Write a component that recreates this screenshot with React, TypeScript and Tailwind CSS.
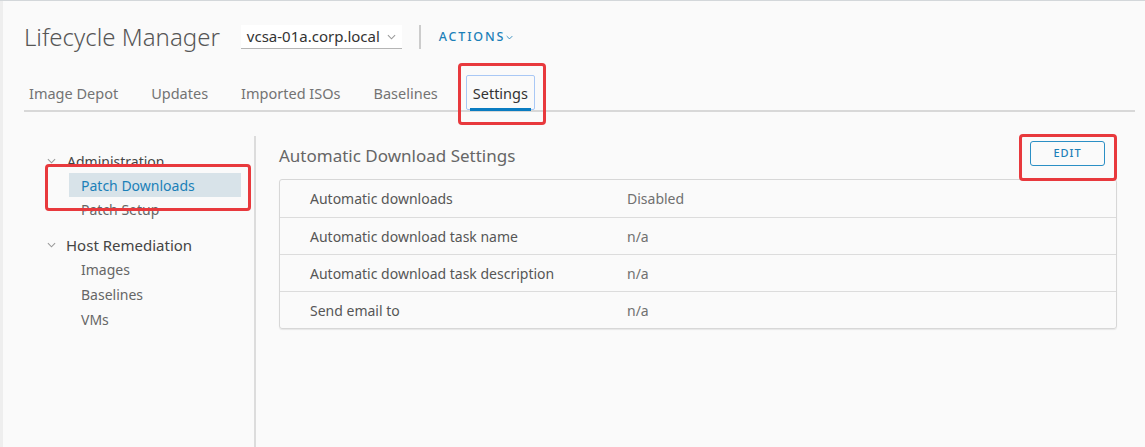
const FONT = "font-['Noto_Sans','Open_Sans',sans-serif]"

function Chevron({ className }: { className?: string }) {
  return (
    <svg viewBox="0 0 10 6" className={className} fill="none" aria-hidden="true">
      <path d="M1 1l4 4 4-4" stroke="currentColor" strokeWidth="1.2" />
    </svg>
  )
}

const tabs = ['Image Depot', 'Updates', 'Imported ISOs', 'Baselines', 'Settings']

const rows = [
  ['Automatic downloads', 'Disabled'],
  ['Automatic download task name', 'n/a'],
  ['Automatic download task description', 'n/a'],
  ['Send email to', 'n/a'],
]

export default function App() {
  return (
    <div className={`${FONT} relative w-[1145px] h-[447px] overflow-hidden bg-[#fafafa] border-t border-[#d3d7da] text-[#565656]`}>
      <div className="h-full border-l-[3px] border-[#eeeeee] flex flex-col">
        {/* Header */}
        <div className="pl-[21px] pr-[10px] pt-[24px]">
          <div className="flex items-center h-[24px]">
            <h1 className="text-[24px] font-light leading-[24px] text-[#565656] tracking-[0px]">Lifecycle Manager</h1>
            <div className="ml-[21px] flex items-center h-[24px] bg-white border-b border-[#b5b5b5] pl-[6px] pr-[6px] text-[15px] text-[#333]">
              vcsa-01a.corp.local
              <Chevron className="ml-[7px] w-[9px] h-[6px] text-[#999]" />
            </div>
            <div className="ml-[17px] w-[2px] h-[24px] bg-[#ccc]" />
            <button className="ml-[18px] flex items-center text-[12.5px] font-medium tracking-[1.8px] text-[#1b80b8]">
              ACTIONS
              <Chevron className="ml-[1px] w-[7px] h-[5px]" />
            </button>
          </div>

          {/* Tabs */}
          <div className="mt-[26px] flex gap-[23px] border-b-2 border-[#d8d8d8]">
            {tabs.map((t) => {
              const active = t === 'Settings'
              return (
                <div
                  key={t}
                  className={
                    active
                      ? 'relative h-[35px] pt-[2px] px-[6px] flex items-center text-[14.5px] text-[#333] border border-[#a9c8f5] rounded-[2px]'
                      : 'h-[35px] pt-[2px] px-[5px] flex items-center text-[14.5px] text-[#737373]'
                  }
                >
                  {t}
                  {active && <div className="absolute left-[3px] right-[3px] -bottom-[2px] h-[3px] bg-[#0a7cc1]" />}
                </div>
              )
            })}
          </div>
        </div>

        {/* Body */}
        <div className="flex flex-1 mt-[24px]">
          <nav className="w-[253px] shrink-0 border-r-2 border-[#dcdcdc] pt-[13px] text-[14px]">
            <div className="flex items-center h-[24px] pl-[44px]">
              <Chevron className="w-[9px] h-[6px] text-[#999]" />
              <span className="ml-[11px] text-[#444]">Administration</span>
            </div>
            <div className="ml-[66px] w-[172px] h-[24px] flex items-center pl-[12px] bg-[#d8e3e9] text-[#1b80b8]">Patch Downloads</div>
            <div className="ml-[66px] h-[25px] flex items-center pl-[12px] text-[#666]">Patch Setup</div>
            <div className="flex items-center h-[24px] pl-[44px] mt-[11px]">
              <Chevron className="w-[9px] h-[6px] text-[#999]" />
              <span className="ml-[10px] text-[15px] text-[#444]">Host Remediation</span>
            </div>
            <div className="ml-[66px] pl-[12px] h-[25px] flex items-center text-[#666]">Images</div>
            <div className="ml-[66px] pl-[12px] h-[25px] flex items-center text-[#666]">Baselines</div>
            <div className="ml-[66px] pl-[12px] h-[25px] flex items-center text-[#666]">VMs</div>
          </nav>

          <main className="flex-1 pl-[23px] pr-[28px] pt-[5px]">
            <div className="flex items-center justify-between h-[28px]">
              <h2 className="text-[17px] text-[#666] mt-[2px]">Automatic Download Settings</h2>
              <button className="mr-[12px] -mt-[3px] w-[75px] h-[25px] border border-[#2b8fc5] rounded-[3px] text-[11px] tracking-[1px] text-[#1b80b8] font-medium">
                EDIT
              </button>
            </div>
            <div className="mt-[10px] border border-[#d7d7d7] rounded-[3px] shadow-[0_1px_1px_rgba(0,0,0,0.08)]">
              {rows.map(([k, v], i) => (
                <div key={k} className={`flex items-center h-[37px] text-[14px] ${i > 0 ? 'border-t border-[#dcdcdc]' : ''}`}>
                  <div className="w-[347px] pl-[30px] text-[#565656]">{k}</div>
                  <div className="text-[#707070]">{v}</div>
                </div>
              ))}
            </div>
          </main>
        </div>
      </div>

      {/* Red annotation boxes */}
      <div className="absolute left-[458px] top-[62px] w-[88px] h-[62px] border-[3px] border-[#e8393d] rounded-[4px]" />
      <div className="absolute left-[45px] top-[163px] w-[206px] h-[47px] border-[3px] border-[#e8393d] rounded-[4px]" />
      <div className="absolute left-[1019px] top-[133px] w-[98px] h-[47px] border-[3px] border-[#e8393d] rounded-[4px]" />
    </div>
  )
}
